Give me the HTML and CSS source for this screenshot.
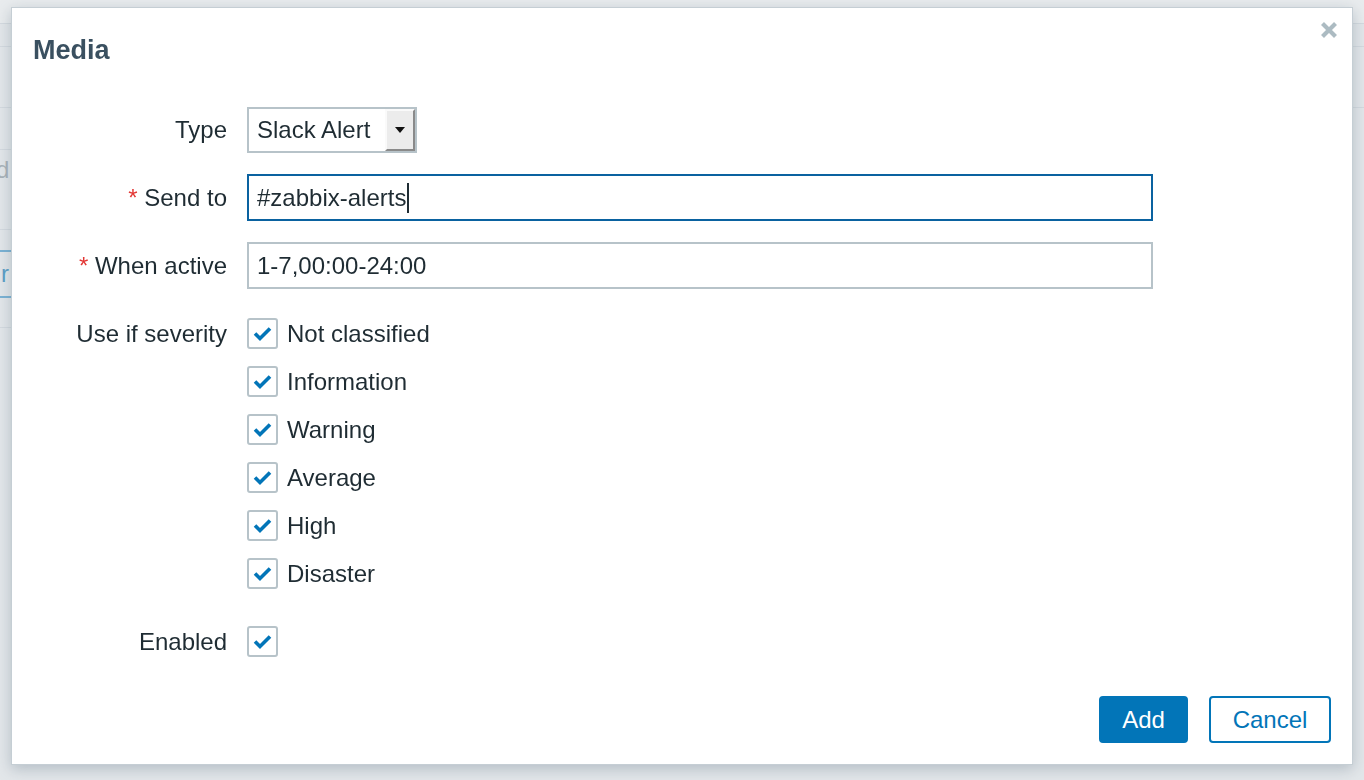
FILE: index.html
```html
<!DOCTYPE html>
<html>
<head>
<meta charset="utf-8">
<link rel="stylesheet" href="styles.css">
</head>
<body>
<div class="page">
  <div class="bg-row bg-top"></div>
  <div class="bg-row bg-r2"></div>
  <div class="bg-row bg-r3"></div>
  <div class="bg-left">
    <div class="bg-cell bg-c1"></div>
    <div class="bg-cell bg-c2"><span class="bg-d">d</span></div>
    <div class="bg-cell bg-c3"><span class="bg-r">r</span></div>
  </div>
</div>

<div class="overlay">
  <div class="dialog">
    <button class="close" aria-label="Close">
      <svg width="18" height="18" viewBox="0 0 18 18"><path d="M2.5 2.5 L15.5 15.5 M15.5 2.5 L2.5 15.5" stroke="#acbbc2" stroke-width="4.2" fill="none"/></svg>
    </button>
    <h1 class="title">Media</h1>

    <div class="form">
      <div class="label">Type</div>
      <div class="field">
        <div class="select">
          <span class="select-text">Slack Alert</span>
          <span class="select-btn"><span class="tri"></span></span>
        </div>
      </div>

      <div class="label"><span class="req">*</span> Send to</div>
      <div class="field">
        <div class="input focused">#zabbix-alerts<span class="caret"></span></div>
      </div>

      <div class="label"><span class="req">*</span> When active</div>
      <div class="field">
        <div class="input">1-7,00:00-24:00</div>
      </div>

      <div class="label label-top">Use if severity</div>
      <div class="field">
        <ul class="checks">
          <li class="check"><span class="box"><svg width="31" height="31" viewBox="0 0 31 31"><path d="M8 15.5 L13 20.5 L23 10.5" stroke="#0275b8" stroke-width="3.6" fill="none"/></svg></span>Not classified</li>
          <li class="check"><span class="box"><svg width="31" height="31" viewBox="0 0 31 31"><path d="M8 15.5 L13 20.5 L23 10.5" stroke="#0275b8" stroke-width="3.6" fill="none"/></svg></span>Information</li>
          <li class="check"><span class="box"><svg width="31" height="31" viewBox="0 0 31 31"><path d="M8 15.5 L13 20.5 L23 10.5" stroke="#0275b8" stroke-width="3.6" fill="none"/></svg></span>Warning</li>
          <li class="check"><span class="box"><svg width="31" height="31" viewBox="0 0 31 31"><path d="M8 15.5 L13 20.5 L23 10.5" stroke="#0275b8" stroke-width="3.6" fill="none"/></svg></span>Average</li>
          <li class="check"><span class="box"><svg width="31" height="31" viewBox="0 0 31 31"><path d="M8 15.5 L13 20.5 L23 10.5" stroke="#0275b8" stroke-width="3.6" fill="none"/></svg></span>High</li>
          <li class="check"><span class="box"><svg width="31" height="31" viewBox="0 0 31 31"><path d="M8 15.5 L13 20.5 L23 10.5" stroke="#0275b8" stroke-width="3.6" fill="none"/></svg></span>Disaster</li>
        </ul>
      </div>

      <div class="label">Enabled</div>
      <div class="field">
        <div class="check"><span class="box"><svg width="31" height="31" viewBox="0 0 31 31"><path d="M8 15.5 L13 20.5 L23 10.5" stroke="#0275b8" stroke-width="3.6" fill="none"/></svg></span></div>
      </div>
    </div>

    <div class="footer">
      <button class="btn btn-primary">Add</button>
      <button class="btn btn-alt">Cancel</button>
    </div>
  </div>
</div>
</body>
</html>
```

FILE: styles.css
```css
* { box-sizing: border-box; }
html, body {
  margin: 0;
  padding: 0;
  width: 1364px;
  height: 780px;
  overflow: hidden;
}
body {
  background: #e3e7ea;
  font-family: "Liberation Sans", Arial, Helvetica, sans-serif;
  color: #1f2c33;
}

/* background page (dimmed) */
.page {
  width: 1364px;
  height: 780px;
}
.bg-row {
  border-bottom: 1px solid #d4dadf;
}
.bg-top { height: 24px; background: #e9ecee; }
.bg-r2 { height: 23px; }
.bg-r3 { height: 61px; }
.bg-left { width: 12px; }
.bg-cell {
  border-bottom: 1px solid #d4dadf;
  position: relative;
  overflow: hidden;
}
.bg-c1 { height: 42px; }
.bg-c2 { height: 80px; }
.bg-c3 { height: 98px; }
.bg-d {
  position: absolute;
  left: -4px;
  top: 6px;
  font-size: 24px;
  color: #a9b2b8;
}
.bg-r {
  position: absolute;
  left: -5px;
  top: 20px;
  font-size: 24px;
  color: #5c9fc7;
  border-top: 2px solid #7ab2d4;
  border-bottom: 2px solid #7ab2d4;
  padding: 11px 6px 11px 6px;
  line-height: 22px;
}

/* modal */
.overlay {
  position: fixed;
  inset: 0;
}
.dialog {
  position: absolute;
  left: 11px;
  top: 7px;
  width: 1342px;
  height: 758px;
  background: #ffffff;
  border: 1px solid #c5ced4;
  box-shadow: 0 4px 14px rgba(90, 110, 125, 0.35);
  display: flex;
  flex-direction: column;
}
.close {
  position: absolute;
  right: 14px;
  top: 13px;
  width: 18px;
  height: 18px;
  padding: 0;
  border: 0;
  background: none;
  display: flex;
}
.title {
  margin: 0;
  padding: 27px 0 0 21px;
  font-size: 27px;
  line-height: 31px;
  font-weight: bold;
  color: #3a5060;
}

.form {
  margin-top: 41px;
  display: grid;
  grid-template-columns: 215px 906px;
  column-gap: 20px;
  row-gap: 21px;
  align-items: center;
  font-size: 24px;
}
.label {
  text-align: right;
  color: #1f2c33;
}
.label-top {
  align-self: start;
  line-height: 47px;
}
.req {
  color: #e33734;
}
.field {
  display: flex;
}
.select {
  width: 170px;
  height: 46px;
  border: 2px solid #b7c3c9;
  display: flex;
  align-items: stretch;
  background: #fff;
}
.select-text {
  flex: 1;
  padding-left: 8px;
  display: flex;
  align-items: center;
  white-space: nowrap;
}
.select-btn {
  width: 30px;
  flex: none;
  background: #ececec;
  border-top: 2px solid #fafafa;
  border-left: 2px solid #fafafa;
  border-right: 2px solid #8a8a8a;
  border-bottom: 2px solid #8a8a8a;
  display: flex;
  align-items: center;
  justify-content: center;
}
.tri {
  width: 0;
  height: 0;
  border-left: 5px solid transparent;
  border-right: 5px solid transparent;
  border-top: 6px solid #111;
}
.input {
  width: 906px;
  height: 47px;
  border: 2px solid #b7c3c9;
  padding: 0 8px;
  display: flex;
  align-items: center;
  color: #1f2c33;
}
.input.focused {
  border-color: #0a62a0;
}
.caret {
  display: inline-block;
  width: 2px;
  height: 30px;
  background: #1f2c33;
  margin-left: 1px;
}
.checks {
  list-style: none;
  margin: 0;
  padding: 0;
  display: flex;
  flex-direction: column;
  gap: 1px;
}
.check {
  height: 47px;
  display: flex;
  align-items: center;
  gap: 9px;
}
.box {
  width: 31px;
  height: 31px;
  border: 2px solid #b7c3c9;
  border-radius: 3px;
  display: flex;
  align-items: center;
  justify-content: center;
  background: #fff;
}
.box svg {
  flex: none;
}

.footer {
  margin-top: auto;
  padding: 0 21px 21px 0;
  display: flex;
  justify-content: flex-end;
  gap: 21px;
}
.btn {
  height: 47px;
  border-radius: 4px;
  font-family: "Liberation Sans", Arial, Helvetica, sans-serif;
  font-size: 24px;
  padding: 0;
}
.btn-primary {
  width: 89px;
  background: #0275b8;
  border: 2px solid #0275b8;
  color: #fff;
}
.btn-alt {
  width: 122px;
  background: #fff;
  border: 2px solid #0275b8;
  color: #0275b8;
}
```
